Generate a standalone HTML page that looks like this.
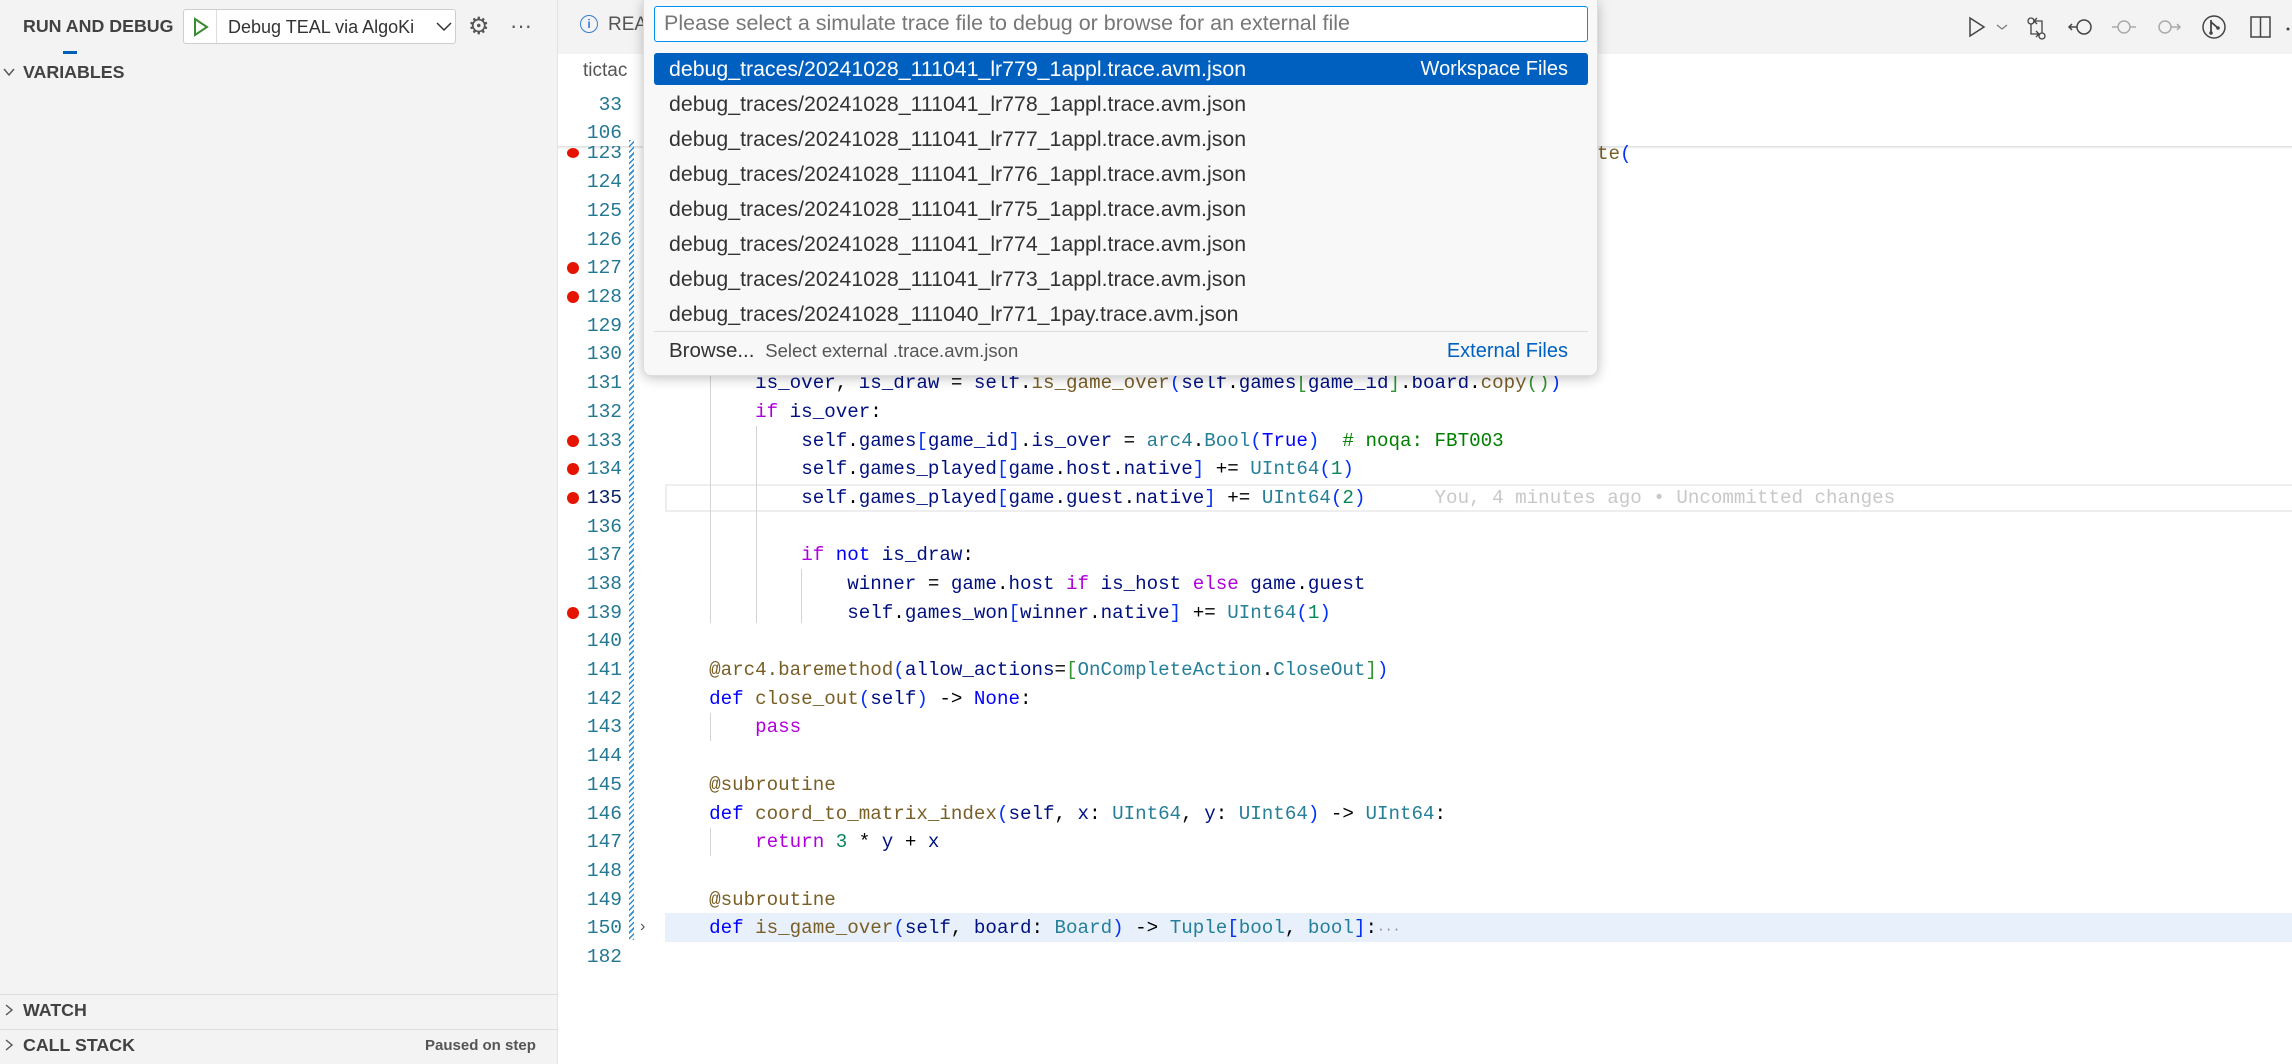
<!DOCTYPE html>
<html><head><meta charset="utf-8"><style>
*{margin:0;padding:0;box-sizing:border-box}
body{width:2292px;height:1064px;overflow:hidden;background:#fff;font-family:"Liberation Sans",sans-serif;position:relative}
.abs{position:absolute}
#side{left:0;top:0;width:558px;height:1064px;background:#f3f3f3;border-right:1px solid #e3e3e3}
.hdr{font-weight:bold;font-size:17.8px;color:#424242}
#tabs{left:558px;top:0;width:1734px;height:54px;background:#f3f3f3}
.ln{position:absolute;left:560px;width:62px;text-align:right;font-family:"Liberation Mono",monospace;font-size:19.5px;color:#237893;height:28.7px;line-height:28.7px}
.cd{position:absolute;left:663px;font-family:"Liberation Mono",monospace;font-size:19.2px;white-space:pre;color:#000;height:28.7px;line-height:28.7px}
.bp{position:absolute;left:567px;width:12px;height:12px;border-radius:50%;background:#e51400}
.k{color:#0000ff}.c{color:#af00db}.f{color:#795e26}.v{color:#001080}.t{color:#267f99}.n{color:#098658}.cm{color:#008000}
.b1{color:#0431fa}.b2{color:#319331}.b3{color:#7b3814}
.g{position:absolute;width:1px;background:#d3d3d3}
#qp{left:643px;top:0;width:955px;height:376px;background:#f8f8f8;border-radius:0 0 8px 8px;box-shadow:0 2px 12px rgba(0,0,0,.25);border:1px solid #ddd;border-top:none}
.it{position:absolute;left:10px;width:934px;height:32px;line-height:32px;font-size:21.3px;color:#333;padding-left:15px}
</style></head><body>
<div id="side" class="abs">
 <div class="abs hdr" style="left:23px;top:16px">RUN AND DEBUG</div>
 <div class="abs" style="left:183px;top:9px;width:273px;height:35px;border:1px solid #cecece;background:#fff;border-radius:3px">
  <svg class="abs" style="left:8px;top:7px" width="18" height="20"><path d="M3 2 L15 10 L3 18 Z" fill="none" stroke="#388a34" stroke-width="2"/></svg>
  <div class="abs" style="left:32px;top:0;width:1px;height:33px;background:#ddd"></div>
  <div class="abs" style="left:44px;top:7px;font-size:18px;color:#333">Debug TEAL via AlgoKi</div>
  <svg class="abs" style="left:252px;top:11px" width="16" height="12"><path d="M1 2 L8 9 L15 2" fill="none" stroke="#333" stroke-width="1.5"/></svg>
 </div>
 <div class="abs" style="left:468px;top:12px;font-size:24px;color:#555">⚙</div>
 <div class="abs" style="left:510px;top:13px;font-size:22px;color:#555">···</div>
 <div class="abs" style="left:63px;top:51px;width:14px;height:3px;background:#005fb8"></div>
 <svg class="abs" style="left:2px;top:65px" width="14" height="14"><path d="M2 4 L7 10 L12 4" fill="none" stroke="#555" stroke-width="1.4"/></svg>
 <div class="abs hdr" style="left:23px;top:62px">VARIABLES</div>
 <div class="abs" style="left:0;top:994px;width:557px;height:1px;background:#ddd"></div>
 <svg class="abs" style="left:2px;top:1003px" width="14" height="14"><path d="M4 2 L10 7 L4 12" fill="none" stroke="#555" stroke-width="1.4"/></svg>
 <div class="abs hdr" style="left:23px;top:1000px">WATCH</div>
 <div class="abs" style="left:0;top:1029px;width:557px;height:1px;background:#ddd"></div>
 <svg class="abs" style="left:2px;top:1038px" width="14" height="14"><path d="M4 2 L10 7 L4 12" fill="none" stroke="#555" stroke-width="1.4"/></svg>
 <div class="abs hdr" style="left:23px;top:1035px">CALL STACK</div>
 <div class="abs" style="left:425px;top:1037px;font-size:15px;font-weight:bold;color:#555">Paused on step</div>
</div>
<div id="tabs" class="abs">
 <div class="abs" style="left:22px;top:15px;width:18px;height:18px;border:1.5px solid #3a7bd5;border-radius:50%;color:#3a7bd5;font-size:12px;text-align:center;line-height:16px;font-weight:bold">i</div>
 <div class="abs" style="left:50px;top:14px;font-size:19px;color:#555">REA</div>
 <svg class="abs" style="top:12px;left:1410px" width="330" height="30">
  <path d="M2 6 L2 24 L16 15 Z" fill="none" stroke="#444" stroke-width="1.5"/>
  <path d="M29 13 L34 17 L39 13" fill="none" stroke="#777" stroke-width="1.2"/>
  <circle cx="63" cy="9" r="3" fill="none" stroke="#444" stroke-width="1.3"/><circle cx="74" cy="24" r="3" fill="none" stroke="#444" stroke-width="1.3"/>
  <path d="M63 12 V22 H70 M74 21 V9 H67 M69 6 L66 9 L69 12 M68 19 L71 22 L68 25" fill="none" stroke="#444" stroke-width="1.3"/>
  <circle cx="116" cy="15" r="7" fill="none" stroke="#444" stroke-width="1.5"/><path d="M109 15 H101 M104 12 L101 15 L104 18" fill="none" stroke="#444" stroke-width="1.5"/>
  <circle cx="156" cy="15" r="6" fill="none" stroke="#aaa" stroke-width="1.5"/><path d="M144 15 H150 M162 15 H168" stroke="#aaa" stroke-width="1.5"/>
  <circle cx="197" cy="15" r="6" fill="none" stroke="#aaa" stroke-width="1.5"/><path d="M203 15 H212 M209 12 L212 15 L209 18" fill="none" stroke="#aaa" stroke-width="1.5"/>
  <circle cx="246" cy="15" r="11" fill="none" stroke="#444" stroke-width="1.5"/><path d="M243 8 V22 M243 10 L250 16" stroke="#444" stroke-width="1.8"/><circle cx="243" cy="21" r="1.8" fill="#444"/><circle cx="250" cy="16" r="1.8" fill="#444"/>
  <rect x="283" y="5" width="19" height="20" fill="none" stroke="#444" stroke-width="1.5"/><path d="M292.5 5 V25" stroke="#444" stroke-width="1.5"/>
  <circle cx="320" cy="17" r="1.5" fill="#444"/><circle cx="327" cy="17" r="1.5" fill="#444"/>
 </svg>
</div>
<div class="abs" style="left:583px;top:60px;font-size:19px;color:#555">tictac</div>
<div class="abs" style="left:558px;top:146px;width:1734px;height:3px;background:linear-gradient(#ddd,#fff)"></div>
<div class="abs" style="left:629px;top:140px;width:5px;height:800px;background:repeating-linear-gradient(135deg,#2b8dd6 0 1.5px,transparent 1.5px 4px)"></div>
<div class="abs" style="left:665px;top:484px;width:1627px;height:28px;border:2px solid #eee;border-right:none"></div>
<div class="abs" style="left:665px;top:913px;width:1627px;height:29px;background:#e8f1fb"></div>
<div class="g" style="left:710px;top:368px;height:255px"></div>
<div class="g" style="left:756px;top:426px;height:197px"></div>
<div class="g" style="left:801px;top:569px;height:54px"></div>
<div class="g" style="left:710px;top:713px;height:28px"></div>
<div class="g" style="left:710px;top:828px;height:28px"></div>
<div class="ln" style="top:91px">33</div>
<div class="ln" style="top:119px">106</div>
<div class="ln" style="top:146px;height:14px;overflow:hidden;line-height:14px">123</div>
<div class="bp" style="left:567px;top:148px;height:10px"></div>
<div class="cd" style="left:1597px;top:140px;color:#795e26">te<span class="b1">(</span></div>
<div class="ln" style="top:168px">124</div><div class="ln" style="top:197px">125</div><div class="ln" style="top:226px">126</div>
<div class="ln" style="top:254px">127</div><div class="bp" style="top:262px"></div>
<div class="ln" style="top:283px">128</div><div class="bp" style="top:291px"></div>
<div class="ln" style="top:312px">129</div><div class="ln" style="top:340px">130</div>
<div class="ln" style="top:369px">131</div><div class="cd" style="top:369px">        <span class="v">is_over</span>, <span class="v">is_draw</span> = <span class="v">self</span>.<span class="f">is_game_over</span><span class="b1">(</span><span class="v">self</span>.<span class="v">games</span><span class="b2">[</span><span class="v">game_id</span><span class="b2">]</span>.<span class="v">board</span>.<span class="f">copy</span><span class="b2">()</span><span class="b1">)</span></div>
<div class="ln" style="top:398px">132</div><div class="cd" style="top:398px">        <span class="c">if</span> <span class="v">is_over</span>:</div>
<div class="ln" style="top:427px">133</div><div class="bp" style="top:435px"></div><div class="cd" style="top:427px">            <span class="v">self</span>.<span class="v">games</span><span class="b1">[</span><span class="v">game_id</span><span class="b1">]</span>.<span class="v">is_over</span> = <span class="t">arc4</span>.<span class="t">Bool</span><span class="b1">(</span><span class="k">True</span><span class="b1">)</span>  <span class="cm"># noqa: FBT003</span></div>
<div class="ln" style="top:455px">134</div><div class="bp" style="top:463px"></div><div class="cd" style="top:455px">            <span class="v">self</span>.<span class="v">games_played</span><span class="b1">[</span><span class="v">game</span>.<span class="v">host</span>.<span class="v">native</span><span class="b1">]</span> += <span class="t">UInt64</span><span class="b1">(</span><span class="n">1</span><span class="b1">)</span></div>
<div class="ln" style="top:484px;color:#0b216f">135</div><div class="bp" style="top:492px"></div><div class="cd" style="top:484px">            <span class="v">self</span>.<span class="v">games_played</span><span class="b1">[</span><span class="v">game</span>.<span class="v">guest</span>.<span class="v">native</span><span class="b1">]</span> += <span class="t">UInt64</span><span class="b1">(</span><span class="n">2</span><span class="b1">)</span>      <span style="color:#c8c8c8">You, 4 minutes ago • Uncommitted changes</span></div>
<div class="ln" style="top:513px">136</div>
<div class="ln" style="top:541px">137</div><div class="cd" style="top:541px">            <span class="c">if</span> <span class="k">not</span> <span class="v">is_draw</span>:</div>
<div class="ln" style="top:570px">138</div><div class="cd" style="top:570px">                <span class="v">winner</span> = <span class="v">game</span>.<span class="v">host</span> <span class="c">if</span> <span class="v">is_host</span> <span class="c">else</span> <span class="v">game</span>.<span class="v">guest</span></div>
<div class="ln" style="top:599px">139</div><div class="bp" style="top:607px"></div><div class="cd" style="top:599px">                <span class="v">self</span>.<span class="v">games_won</span><span class="b1">[</span><span class="v">winner</span>.<span class="v">native</span><span class="b1">]</span> += <span class="t">UInt64</span><span class="b1">(</span><span class="n">1</span><span class="b1">)</span></div>
<div class="ln" style="top:627px">140</div>
<div class="ln" style="top:656px">141</div><div class="cd" style="top:656px">    <span class="f">@arc4.baremethod</span><span class="b1">(</span><span class="v">allow_actions</span>=<span class="b2">[</span><span class="t">OnCompleteAction</span>.<span class="t">CloseOut</span><span class="b2">]</span><span class="b1">)</span></div>
<div class="ln" style="top:685px">142</div><div class="cd" style="top:685px">    <span class="k">def</span> <span class="f">close_out</span><span class="b1">(</span><span class="v">self</span><span class="b1">)</span> -&gt; <span class="k">None</span>:</div>
<div class="ln" style="top:713px">143</div><div class="cd" style="top:713px">        <span class="c">pass</span></div>
<div class="ln" style="top:742px">144</div>
<div class="ln" style="top:771px">145</div><div class="cd" style="top:771px">    <span class="f">@subroutine</span></div>
<div class="ln" style="top:800px">146</div><div class="cd" style="top:800px">    <span class="k">def</span> <span class="f">coord_to_matrix_index</span><span class="b1">(</span><span class="v">self</span>, <span class="v">x</span>: <span class="t">UInt64</span>, <span class="v">y</span>: <span class="t">UInt64</span><span class="b1">)</span> -&gt; <span class="t">UInt64</span>:</div>
<div class="ln" style="top:828px">147</div><div class="cd" style="top:828px">        <span class="c">return</span> <span class="n">3</span> * <span class="v">y</span> + <span class="v">x</span></div>
<div class="ln" style="top:857px">148</div>
<div class="ln" style="top:886px">149</div><div class="cd" style="top:886px">    <span class="f">@subroutine</span></div>
<div class="ln" style="top:914px">150</div><div class="abs" style="left:640px;top:918px;font-size:16px;color:#555">›</div><div class="cd" style="top:914px">    <span class="k">def</span> <span class="f">is_game_over</span><span class="b1">(</span><span class="v">self</span>, <span class="v">board</span>: <span class="t">Board</span><span class="b1">)</span> -&gt; <span class="t">Tuple</span><span class="b1">[</span><span class="t">bool</span>, <span class="t">bool</span><span class="b1">]</span>:<span style="color:#888;font-size:13px">···</span></div>
<div class="ln" style="top:943px">182</div>
<div id="qp" class="abs">
 <div class="abs" style="left:10px;top:6px;width:934px;height:36px;background:#fff;border:1.5px solid #0090f1;border-radius:3px;font-size:21.5px;color:#777;line-height:33px;padding-left:9px">Please select a simulate trace file to debug or browse for an external file</div>
 <div class="it" style="top:53px;background:#0060c0;color:#fff;border-radius:3px">debug_traces/20241028_111041_lr779_1appl.trace.avm.json<span style="position:absolute;right:20px;font-size:20px">Workspace Files</span></div>
 <div class="it" style="top:88px">debug_traces/20241028_111041_lr778_1appl.trace.avm.json</div>
 <div class="it" style="top:123px">debug_traces/20241028_111041_lr777_1appl.trace.avm.json</div>
 <div class="it" style="top:158px">debug_traces/20241028_111041_lr776_1appl.trace.avm.json</div>
 <div class="it" style="top:193px">debug_traces/20241028_111041_lr775_1appl.trace.avm.json</div>
 <div class="it" style="top:228px">debug_traces/20241028_111041_lr774_1appl.trace.avm.json</div>
 <div class="it" style="top:263px">debug_traces/20241028_111041_lr773_1appl.trace.avm.json</div>
 <div class="it" style="top:298px">debug_traces/20241028_111040_lr771_1pay.trace.avm.json</div>
 <div class="abs" style="left:10px;top:331px;width:934px;height:1px;background:#ddd"></div>
 <div class="it" style="top:335px;font-size:20.5px">Browse... <span style="font-size:18.5px;color:#555">&nbsp;Select external .trace.avm.json</span><span style="position:absolute;right:20px;color:#0060c0;font-size:20px">External Files</span></div>
</div>
</body></html>
